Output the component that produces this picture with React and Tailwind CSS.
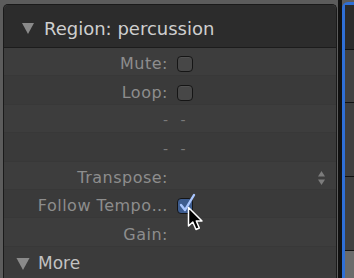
import { useState } from 'react';

const ROWS = [
  { label: 'Mute:', kind: 'check' },
  { label: 'Loop:', kind: 'check' },
  { label: '', kind: 'dash' },
  { label: '', kind: 'dash' },
  { label: 'Transpose:', kind: 'stepper' },
  { label: 'Follow Tempo…', kind: 'checked' },
  { label: 'Gain:', kind: 'none' },
];

function Triangle({ className = '', w = 12, h = 11 }) {
  return (
    <svg width={w} height={h} viewBox="0 0 12 11" className={className}>
      <path d="M0 0 L12 0 L6 11 Z" fill="#8a8a8a" />
    </svg>
  );
}

function Checkbox({ checked }) {
  if (!checked) {
    return (
      <div className="w-[16px] h-[16px] rounded-[4px] border border-[#151515] bg-[#474747] shadow-[inset_0_1px_0_rgba(255,255,255,0.06)]" />
    );
  }
  return (
    <div className="relative w-[16px] h-[16px]">
      <div className="w-[16px] h-[16px] rounded-[4px] border border-[#151515] bg-[#3d5c8f]" />
      <svg width="20" height="22" viewBox="0 0 20 22" className="absolute left-[1px] top-[-6px]">
        <path d="M3 13 L7 18 L16 3" fill="none" stroke="#a9c6ff" strokeWidth="2.4" strokeLinecap="round" strokeLinejoin="round" />
      </svg>
    </div>
  );
}

function Cursor() {
  return (
    <svg width="20" height="30" viewBox="0 0 20 30" className="absolute left-[10px] top-[8px]">
      <path d="M1.5 1.5 L1.5 20 L5.8 16 L9 23.5 L12.3 22 L9.3 15 L15 15 Z" fill="#000" stroke="#fff" strokeWidth="1.5" strokeLinejoin="round" />
    </svg>
  );
}

export default function App() {
  const [open] = useState(true);

  return (
    <div className="w-[354px] h-[278px] bg-[#5c5c5c] overflow-hidden flex" style={{ fontFamily: '"DejaVu Sans", "Liberation Sans", sans-serif' }}>
      {/* inspector panel */}
      <div className="ml-[3px] mt-[4px] w-[335px] border-l border-t border-r border-[#1a1a1a] rounded-t-[5px] bg-[#3c3c3c] flex flex-col">
        <div className="h-[43px] shrink-0 pt-[4px] bg-[#2c2c2c] rounded-t-[5px] border-b border-[#1c1c1c] flex items-center pl-[18px] gap-[10px]">
          <Triangle className="mt-[1px]" />
          <span className="text-[18px] text-[#cfcfcf]">Region: percussion</span>
        </div>

        {open && ROWS.map((row, i) => (
          <div
            key={i}
            className={`h-[28.4px] shrink-0 pt-[5px] flex items-center border-b border-[#383838] ${i % 2 === 0 ? 'bg-[#3d3d3d]' : 'bg-[#3a3a3a]'}`}
          >
            <div className="w-[164px] text-right text-[16px] tracking-[0.5px] text-[#8d8d8d] whitespace-nowrap">{row.label}</div>
            <div className="flex-1 relative flex items-center pl-[9px]">
              {row.kind === 'check' && <Checkbox />}
              {row.kind === 'checked' && (
                <div className="relative">
                  <Checkbox checked />
                  <Cursor />
                </div>
              )}
              {row.kind === 'dash' && (
                <span className="ml-[-14px] text-[14px] text-[#7a7a7a] tracking-[4px]">- -</span>
              )}
              {row.kind === 'stepper' && (
                <svg width="9" height="16" viewBox="0 0 9 16" className="ml-auto mr-[10px]">
                  <path d="M4.5 1 L8 6.5 L1 6.5 Z" fill="#7c7c7c" />
                  <path d="M4.5 15 L8 9.5 L1 9.5 Z" fill="#7c7c7c" />
                </svg>
              )}
            </div>
          </div>
        ))}

        <div className="h-[28.4px] shrink-0 pt-[5px] flex items-center pl-[12px] gap-[8px] bg-[#3b3b3b]">
          <Triangle className="mt-[1px]" w={14} h={12} />
          <span className="text-[17px] text-[#c2c2c2]">More</span>
        </div>
      </div>

      {/* neighbouring track column with selection outline */}
      <div className="ml-[1px] w-[4px] bg-[#111]" />
      <div className="mt-[2px] w-[12px] border-l-[3px] border-t-[3px] border-[#2f6fd6] rounded-tl-[6px] flex flex-col bg-[#111]">
        <div className="h-[44px] bg-[#2b2b2b]" />
        <div className="h-[52px] mt-[1px] bg-[#414141]" />
        <div className="h-[73px] mt-[1px] bg-[#3f3f3f]" />
        <div className="h-[73px] mt-[1px] bg-[#404040]" />
        <div className="flex-1 mt-[1px] bg-[#6b6b6b]" />
      </div>
    </div>
  );
}
